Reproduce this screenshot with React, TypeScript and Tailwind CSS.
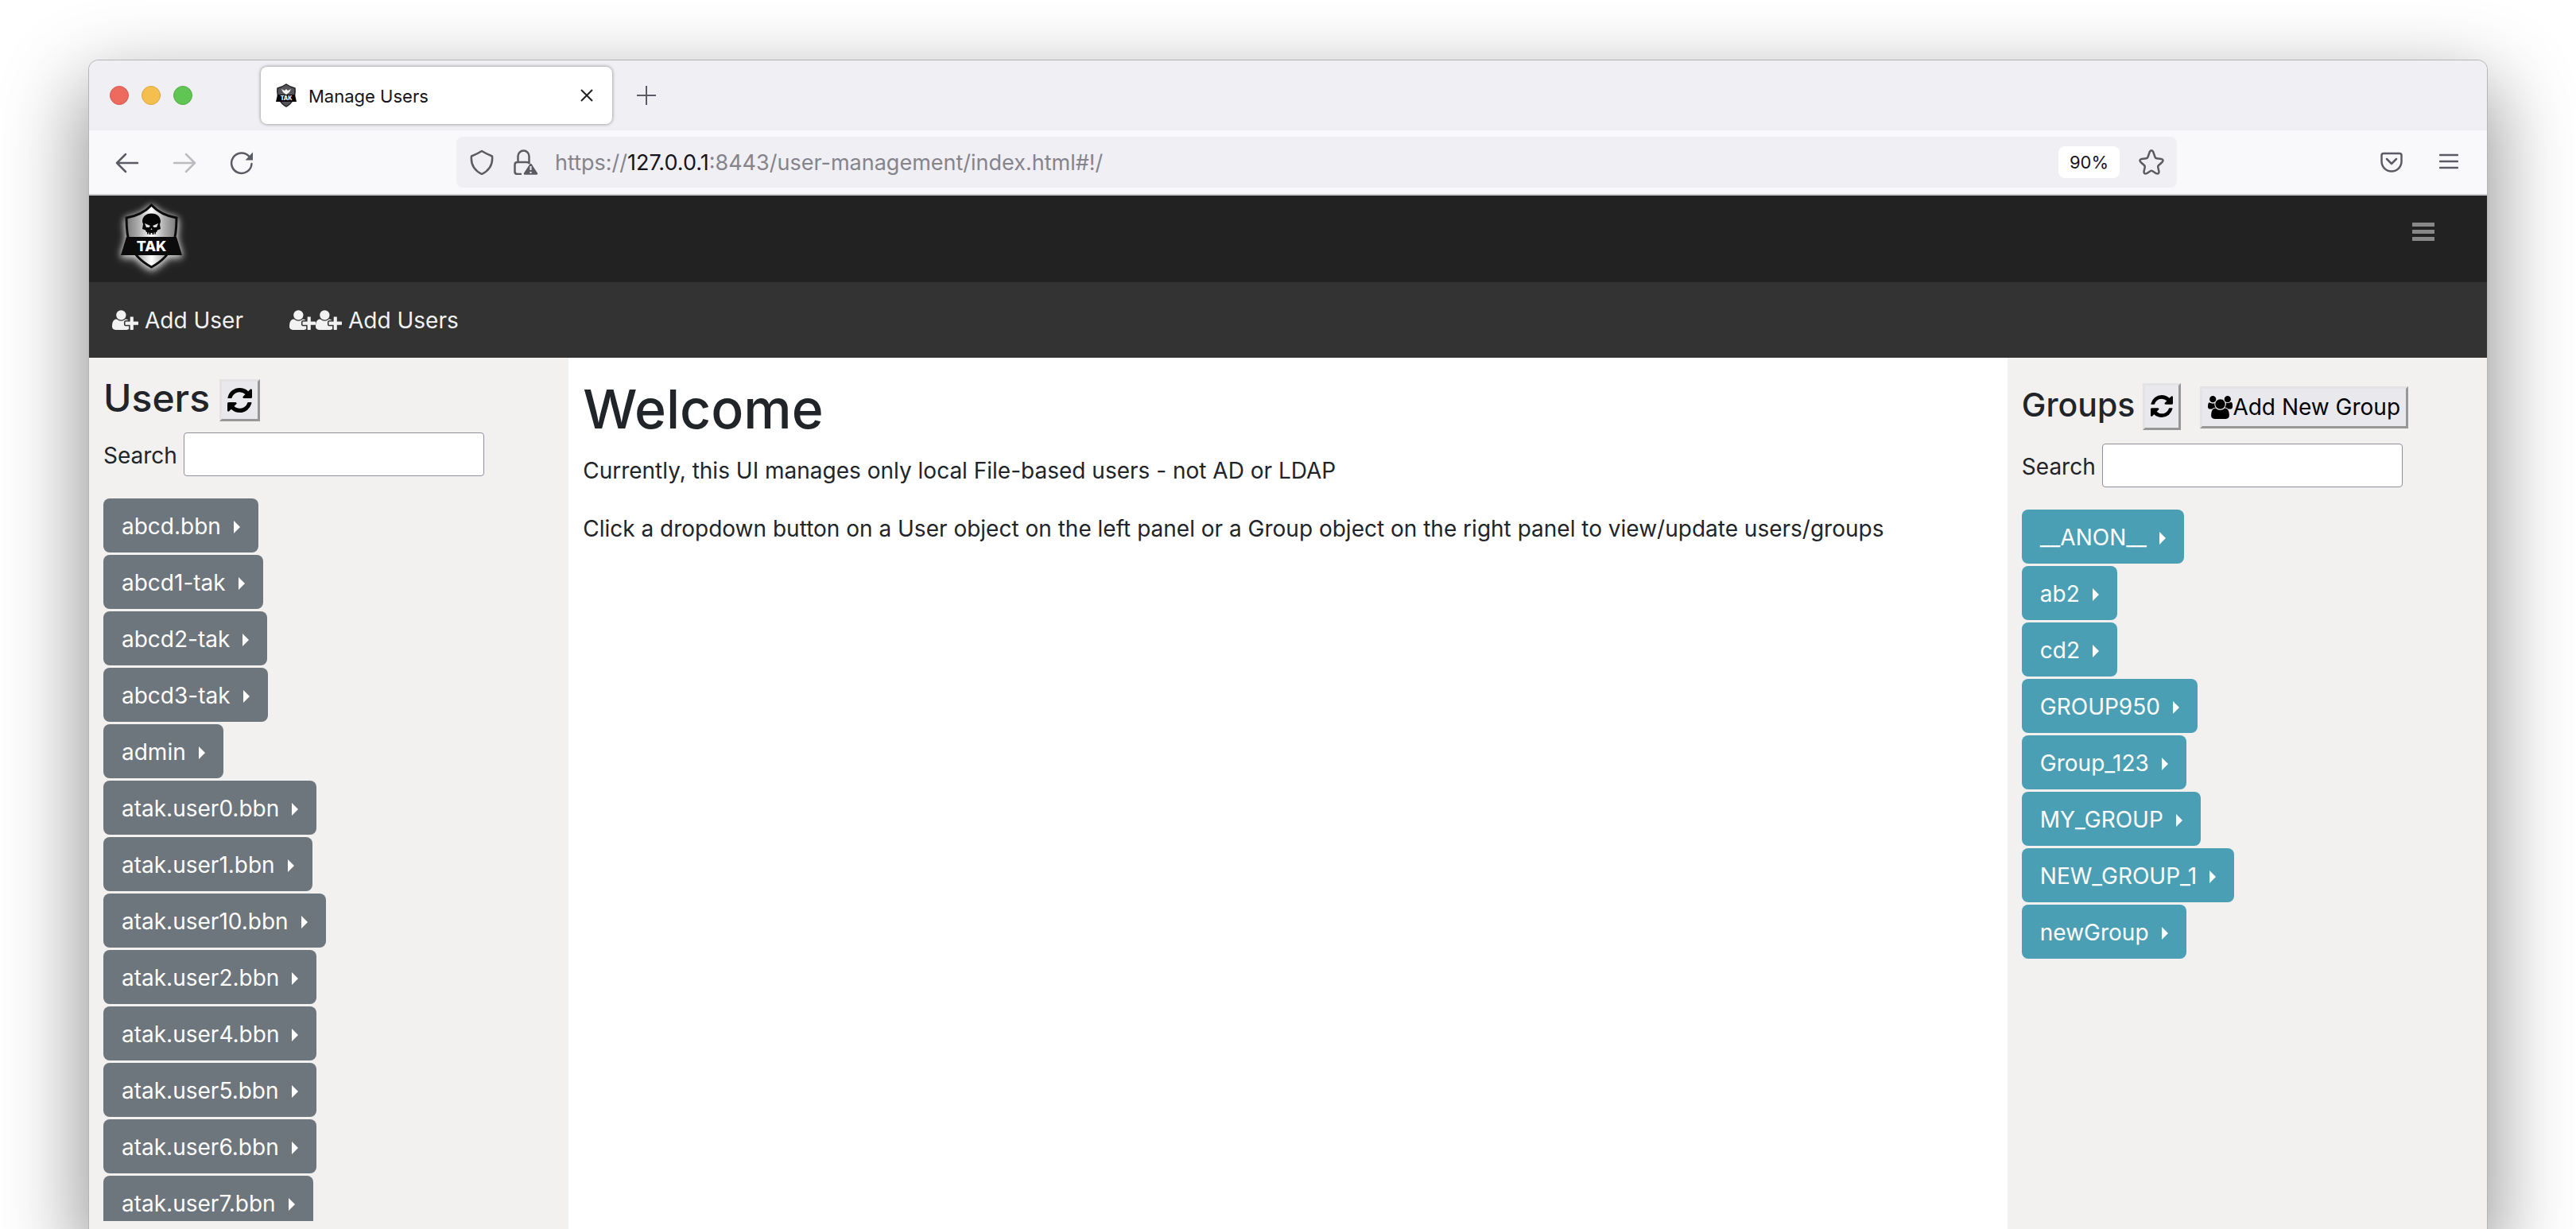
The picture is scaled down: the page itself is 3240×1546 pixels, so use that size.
const users = [
  "abcd.bbn", "abcd1-tak", "abcd2-tak", "abcd3-tak", "admin", "atak.user0.bbn", "atak.user1.bbn",
  "atak.user10.bbn", "atak.user2.bbn", "atak.user4.bbn", "atak.user5.bbn", "atak.user6.bbn", "atak.user7.bbn",
];
const groups = ["__ANON__", "ab2", "cd2", "GROUP950", "Group_123", "MY_GROUP", "NEW_GROUP_1", "newGroup"];

function UserPlusIcon() {
  return (
    <svg viewBox="0 0 2048 1792" className="h-[29px] w-[33px]" fill="currentColor" aria-hidden="true">
      <path d="M704 896q-159 0-271.5-112.5t-112.5-271.5 112.5-271.5 271.5-112.5 271.5 112.5 112.5 271.5-112.5 271.5-271.5 112.5zm960 128h352q13 0 22.5 9.5t9.5 22.5v192q0 13-9.5 22.5t-22.5 9.5h-352v352q0 13-9.5 22.5t-22.5 9.5h-192q-13 0-22.5-9.5t-9.5-22.5v-352h-352q-13 0-22.5-9.5t-9.5-22.5v-192q0-13 9.5-22.5t22.5-9.5h352v-352q0-13 9.5-22.5t22.5-9.5h192q13 0 22.5 9.5t9.5 22.5v352zm-736 224q0 52 38 90t90 38h256v238q-68 50-171 50h-874q-121 0-194-69t-73-190q0-53 3.5-103.5t14-109 26.5-108.5 43-97.5 62-81 85.5-53.5 111.5-20q19 0 39 17 79 61 154.5 91.5t164.5 30.5 164.5-30.5 154.5-91.5q20-17 39-17 132 0 217 96h-223q-52 0-90 38t-38 90v192z" />
    </svg>
  );
}

function RefreshIcon({ className }: { className: string }) {
  return (
    <svg viewBox="128 128 1536 1536" className={className} fill="currentColor" aria-hidden="true">
      <path d="M1639 1056q0 5-1 7-64 268-268 434.5t-478 166.5q-146 0-282.5-55t-243.5-157l-129 129q-19 19-45 19t-45-19-19-45v-448q0-26 19-45t45-19h448q26 0 45 19t19 45-19 45l-137 137q71 66 161 102t187 36q134 0 250-65t186-179q11-17 53-117 8-23 30-23h192q13 0 22.5 9.5t9.5 22.5zm25-800v448q0 26-19 45t-45 19h-448q-26 0-45-19t-19-45 19-45l138-138q-148-137-349-137-134 0-250 65t-186 179q-11 17-53 117-8 23-30 23h-199q-13 0-22.5-9.5t-9.5-22.5v-7q65-268 270-434.5t480-166.5q146 0 284 55.5t245 156.5l130-129q19-19 45-19t45 19 19 45z" />
    </svg>
  );
}

function GroupIcon() {
  return (
    <svg viewBox="0 0 1920 1792" className="h-[29px] w-[31px]" fill="currentColor" aria-hidden="true">
      <path d="M593 896q-162 5-265 128h-134q-82 0-138-40.5t-56-118.5q0-353 124-353 6 0 43.5 21t97.5 42.5 119 21.5q67 0 133-23-5 37-5 66 0 159 93 293zm1071 637q0 120-73 189.5t-194 69.5h-874q-121 0-194-69.5t-73-189.5q0-53 3.5-103.5t14-109 26.5-108.5 43-97.5 62-81 85.5-53.5 111.5-20q10 0 43 21.5t73 48 107 48 135 21.5 135-21.5 107-48 73-48 43-21.5q61 0 111.5 20t85.5 53.5 62 81 43 97.5 26.5 108.5 14 109 3.5 103.5zm-1024-1277q0 106-75 181t-181 75-181-75-75-181 75-181 181-75 181 75 75 181zm704 384q0 159-112.5 271.5t-271.5 112.5-271.5-112.5-112.5-271.5 112.5-271.5 271.5-112.5 271.5 112.5 112.5 271.5zm576 225q0 78-56 118.5t-138 40.5h-134q-103-123-265-128 93-134 93-293 0-29-5-66 66 23 133 23 59 0 119-21.5t97.5-42.5 43.5-21q124 0 124 353zm-128-609q0 106-75 181t-181 75-181-75-75-181 75-181 181-75 181 75 75 181z" />
    </svg>
  );
}

function BrandLogo() {
  return (
    <svg viewBox="0 0 77 82" className="h-[82px] w-[77px] overflow-visible" role="img" aria-label="TAK">
      <defs>
        <linearGradient id="steel" x1="0" x2="1" y1="0" y2="0">
          <stop offset="0" stopColor="#7a7a7a" />
          <stop offset="0.25" stopColor="#b0b0b0" />
          <stop offset="0.5" stopColor="#fff" />
          <stop offset="0.75" stopColor="#b0b0b0" />
          <stop offset="1" stopColor="#7a7a7a" />
        </linearGradient>
      </defs>
      <g style={{ filter: "drop-shadow(0 2px 4px #fffb) drop-shadow(0 2px 5px #fff7)" }}>
        <path d="M38.500 2C46 10 58 16 70 18C70 42 68 64 38.500 80C9 64 7 42 7 18C19 16 31 10 38.500 2Z" fill="url(#steel)" stroke="#0b0b0b" strokeWidth="3" />
        <path d="M7 42H70L77 65H0Z" fill="#0b0b0b" />
      </g>
      <path d="M38.500 12.500C46 12.500 50 17 50 23L49 26L50 32L46 33.500L45 36H44V38.500H42.500V36.500H41.500V39H39.500V37H37.500V39H35.500V36.500H34.500V38.500H33V36H32L31 33.500L27 32L28 26L27 23C27 17 31 12.500 38.500 12.500Z" fill="#050505" />
      <path d="M30 25L37 28L35.500 30H32ZM47 25L40 28L41.500 30H45ZM37.500 33L38.500 31L39.500 33Z" fill="#ddd" />
      <text x="38.500" y="60" textAnchor="middle" fontFamily="Inter, sans-serif" fontWeight="800" fontSize="18" fill="#fff">TAK</text>
    </svg>
  );
}

function TabLogo() {
  return (
    <svg viewBox="0 0 28 30" className="mr-3.5 h-[30px] w-7" aria-hidden="true">
      <path d="M14 1C17 3 21 5 25 6C26 16 22 25 14 29C6 25 2 16 3 6C7 5 11 3 14 1Z" fill="#55555a" stroke="#222" strokeWidth="1.500" />
      <path d="M8 7L12 9L14 7L16 9L20 7L18 11L14 14L10 11Z" fill="#f4f4f4" />
      <path d="M3 14H25L27 23H1Z" fill="#080808" />
      <text x="14" y="21" textAnchor="middle" fontFamily="Inter, sans-serif" fontWeight="800" fontSize="7" fill="#fff">TAK</text>
    </svg>
  );
}

function Caret() {
  return <span aria-hidden="true" className="mt-0.5 h-0 w-0 border-y-8 border-l-8 border-y-transparent border-l-white" />;
}

function Items({ names, tone }: { names: string[]; tone: string }) {
  return (
    <ul className="flex flex-col items-start gap-[3px]">
      {names.map((n) => (
        <li key={n}>
          <button className={`flex h-[68px] items-center gap-4 rounded-lg px-[23px] pt-0.5 text-white ${tone}`}>
            {n}
            <Caret />
          </button>
        </li>
      ))}
    </ul>
  );
}

const raised = "border-[3px] border-t-[#e3e3e5] border-l-[#e3e3e5] border-r-[#979797] border-b-[#979797] bg-[#e9e9ed] text-black";

export default function App() {
  return (
    <div className="h-screen overflow-hidden bg-white px-28 pt-[76px] font-['Inter','Liberation_Sans',sans-serif] text-[28px] leading-[42px] text-[#212529]">
      <div className="flex h-full flex-col overflow-clip rounded-t-xl bg-white shadow-[0_0_0_1px_#b5b5b5,0_40px_100px_10px_rgba(0,0,0,0.42)]">
        <header>
          <div className="flex h-[88px] items-center bg-[#f0eff4] pl-[26px]">
            <div className="flex gap-4">
              <button aria-label="Close window" className="size-6 rounded-full border border-[#d9594f] bg-[#ed6a5e]" />
              <button aria-label="Minimize window" className="size-6 rounded-full border border-[#dba63f] bg-[#f5bf4f]" />
              <button aria-label="Zoom window" className="size-6 rounded-full border border-[#52ad43] bg-[#61c554]" />
            </div>
            <div className="ml-[86px] flex h-[72px] w-[442px] items-center rounded-lg bg-white pr-6 pl-[18px] text-[22px] text-[#15141a] shadow-[0_0_4px_rgba(0,0,0,0.45)]">
              <TabLogo />
              <span className="flex-1 pt-0.5">Manage Users</span>
              <button aria-label="Close tab">
                <svg viewBox="0 0 16 16" className="size-4" fill="none" stroke="#222" strokeWidth="2"><path d="M1 1L15 15M15 1L1 15" /></svg>
              </button>
            </div>
            <button aria-label="New tab" className="ml-[31px]">
              <svg viewBox="0 0 24 24" className="size-6" fill="none" stroke="#5b5b66" strokeWidth="2"><path d="M12 0V24M0 12H24" /></svg>
            </button>
          </div>
          <div className="flex h-[82px] items-center border-b-2 border-[#cccccf] bg-[#f9f9fb] pr-9 pl-8">
            <button aria-label="Back">
              <svg viewBox="0 0 32 32" className="size-8" fill="none" stroke="#5b5b66" strokeWidth="2.500" strokeLinecap="round" strokeLinejoin="round"><path d="M29 17H3M14 6L3 17L14 28" /></svg>
            </button>
            <button aria-label="Forward" className="ml-10">
              <svg viewBox="0 0 32 32" className="size-8" fill="none" stroke="#bbbbc0" strokeWidth="2.500" strokeLinecap="round" strokeLinejoin="round"><path d="M3 17H29M18 6L29 17L18 28" /></svg>
            </button>
            <button aria-label="Reload" className="ml-10">
              <svg viewBox="0 0 32 32" className="size-8" fill="none" stroke="#5b5b66" strokeWidth="2.500" strokeLinecap="round"><path d="M28.500 18A12.700 12.700 0 1 1 25.500 9" /><path d="M30 3.500V13.500H20.500Z" fill="#5b5b66" stroke="none" /></svg>
            </button>
            <div className="ml-[254px] flex h-16 flex-1 items-center rounded-lg bg-[#f0eff4] pr-4 pl-4 text-[27px]">
              <svg viewBox="0 0 32 32" className="size-8" fill="none" stroke="#5b5b60" strokeWidth="2.500" strokeLinejoin="round"><path d="M16 2C20 4.500 24 6.500 29 8.500C30 18 26 26 16 31C6 26 2 18 3 8.500C8 6.500 12 4.500 16 2Z" /></svg>
              <svg viewBox="0 0 32 32" className="ml-6 size-8" fill="none" stroke="#5b5b60" strokeWidth="2.500" strokeLinejoin="round"><path d="M10 31H5Q1.500 31 1.500 28V19Q1.500 16 5 16H16Q19 16 20 18M5.500 16V8.500A7 7 0 0 1 19.500 8.500V17" /><path d="M21.500 19L29 30.500H14Z" fill="#5b5b60" stroke="#5b5b60" /><path d="M21.500 21V26M21.500 28V30" stroke="#f0eff4" strokeWidth="2" /></svg>
              <div className="ml-5 flex-1 pt-0.5 text-[#85848b]">https://<span className="text-[#15141a]">127.0.0.1</span>:8443/user-management/index.html#!/</div>
              <button className="h-10 rounded-lg bg-white px-3.5 text-[22px] leading-10 text-[#15141a]">90%</button>
              <button aria-label="Bookmark" className="ml-6">
                <svg viewBox="0 0 32 32" className="size-8" fill="none" stroke="#5b5b60" strokeWidth="2.500" strokeLinejoin="round"><path d="M13.800 3Q16 -0.500 18.200 3L20.500 9.500Q21 11 22.500 11.200L28.500 12Q32 13 29.500 16L25 20Q24 21 24.300 22.500L25.500 28Q25.500 31.500 22 30.200L17 27Q16 26.500 15 27L10 30.200Q6.500 31.500 6.500 28L7.700 22.500Q8 21 7 20L2.500 16Q0 13 3.500 12L9.500 11.200Q11 11 11.500 9.500Z" /></svg>
              </button>
            </div>
            <button aria-label="Save to Pocket" className="ml-64">
              <svg viewBox="0 0 28 28" className="size-7" fill="none" stroke="#5b5b66" strokeWidth="2.500" strokeLinecap="round" strokeLinejoin="round"><path d="M4 3H24Q26.500 3 26.500 5.500V13A12.500 12.500 0 0 1 1.500 13V5.500Q1.500 3 4 3ZM8 10L14 16L20 10" /></svg>
            </button>
            <button aria-label="Application menu" className="ml-[46px]">
              <svg viewBox="0 0 24 24" className="size-6" fill="none" stroke="#5b5b66" strokeWidth="2.500" strokeLinecap="round"><path d="M1 3H23M1 11H23M1 19H23" /></svg>
            </button>
          </div>
        </header>

        <nav className="flex h-[109px] shrink-0 items-start justify-between bg-[#222] pt-2.5 pr-[66px] pl-10">
          <a href="#home"><BrandLogo /></a>
          <button aria-label="Menu" className="mt-6 flex w-7 flex-col gap-1">
            <span className="h-[5px] w-7 bg-[#888]" /><span className="h-[5px] w-7 bg-[#888]" /><span className="h-[5px] w-7 bg-[#888]" />
          </button>
        </nav>
        <nav className="flex h-[95px] shrink-0 items-center gap-[58px] bg-[#333] pl-[29px] text-[#f2f2f2]">
          <a href="#add-user" className="flex items-center gap-2"><UserPlusIcon />Add User</a>
          <a href="#add-users" className="flex items-center gap-2"><span className="flex"><UserPlusIcon /><UserPlusIcon /></span>Add Users</a>
        </nav>

        <div className="flex min-h-0 flex-1">
          <aside className="flex w-1/5 flex-col bg-[#f3f1ef] px-[18px] pt-[17px] pb-2.5">
            <div className="flex h-[68px] items-center gap-3">
              <h2 className="text-[48px] leading-[60px] font-medium">Users</h2>
              <button aria-label="Refresh users" className={`mt-1 flex h-[53px] items-center px-[7px] ${raised}`}><RefreshIcon className="size-[31px]" /></button>
            </div>
            <div className="mt-[9px] flex items-center gap-2">
              <label htmlFor="su" className="pt-0.5">Search</label>
              <input id="su" className="h-[55px] w-[378px] rounded-sm border border-[#8f8f9d] bg-white px-2" />
            </div>
            <div className="mt-7 min-h-0 flex-1 overflow-hidden"><Items names={users} tone="bg-[#6d757d]" /></div>
          </aside>
          <main className="flex-1 px-[18px] pt-[21px]">
            <h1 className="text-[68px] leading-[86px] font-medium">Welcome</h1>
            <p className="mt-3.5">Currently, this UI manages only local File-based users - not AD or LDAP</p>
            <p className="mt-[31px]">Click a dropdown button on a User object on the left panel or a Group object on the right panel to view/update users/groups</p>
          </main>
          <aside className="w-1/5 bg-[#f3f1ef] px-[18px] pt-[30px]">
            <div className="flex h-[62px] items-center">
              <h3 className="pb-1 text-[41px] leading-[52px] font-medium">Groups</h3>
              <button aria-label="Refresh groups" className={`ml-2.5 flex h-[59px] items-center px-[7px] ${raised}`}><RefreshIcon className="size-7" /></button>
              <button className={`mt-0.5 ml-6 flex h-[53px] items-center px-[7px] whitespace-nowrap ${raised}`}><GroupIcon />Add New Group</button>
            </div>
            <div className="mt-4 flex items-center gap-2">
              <label htmlFor="sg" className="pt-0.5">Search</label>
              <input id="sg" className="h-[55px] w-[378px] rounded-sm border border-[#8f8f9d] bg-white px-2" />
            </div>
            <div className="mt-7"><Items names={groups} tone="bg-[#4b9fb5]" /></div>
          </aside>
        </div>
      </div>
    </div>
  );
}
